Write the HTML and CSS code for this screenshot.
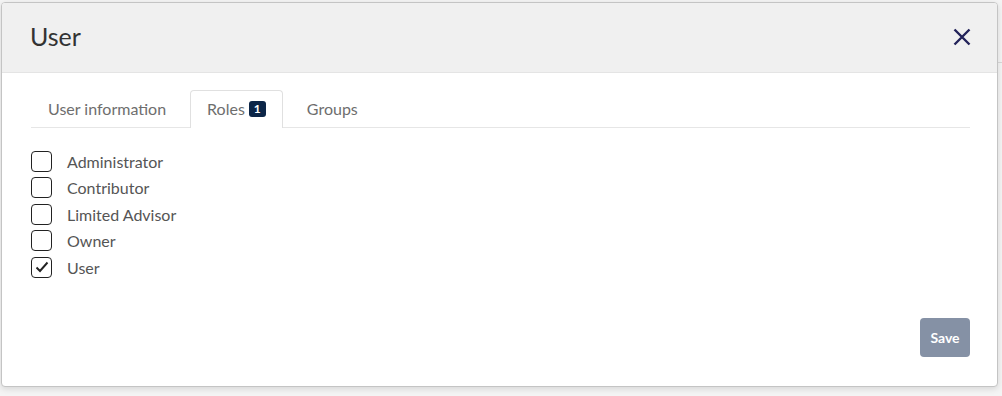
FILE: index.html
```html
<!DOCTYPE html>
<html>
<head>
    <meta charset="UTF-8">
    <title>User</title>
    <link rel="stylesheet" href="styles.css">
</head>
<body>
    <div class="backdrop-line"></div>
    <div class="modal">
        <div class="modal-header">
            <h1 class="modal-title">User</h1>
            <button class="close-button" aria-label="Close">
                <svg width="18" height="18" viewBox="0 0 18 18">
                    <path d="M1.5 1.5 L16.5 16.5 M16.5 1.5 L1.5 16.5" stroke="#23235a" stroke-width="2.4" fill="none"/>
                </svg>
            </button>
        </div>
        <div class="modal-body">
            <div class="tabs">
                <div class="tab">User information</div>
                <div class="tab active">Roles <span class="badge">1</span></div>
                <div class="tab">Groups</div>
            </div>

            <div class="role-list">
                <label class="role"><span class="box"></span>Administrator</label>
                <label class="role"><span class="box"></span>Contributor</label>
                <label class="role"><span class="box"></span>Limited Advisor</label>
                <label class="role"><span class="box"></span>Owner</label>
                <label class="role">
                    <span class="box checked">
                        <svg width="14" height="12" viewBox="0 0 14 12">
                            <path d="M1.5 6.5 L5 10 L12.5 1.5" stroke="#222" stroke-width="1.9" fill="none"/>
                        </svg>
                    </span>User
                </label>
            </div>

            <div class="footer">
                <button class="save-button">Save</button>
            </div>
        </div>
    </div>
</body>
</html>
```

FILE: styles.css
```css
body {
    font-family: Lato, "Noto Sans", sans-serif;
    margin: 0;
    padding: 2px 0 0 1px;
    background-color: #f4f4f4;
    position: relative;
    height: 394px;
    overflow: hidden;
}

.backdrop-line {
    position: absolute;
    left: 998px;
    top: 62px;
    width: 10px;
    height: 1px;
    background-color: #d8d8d8;
}

.modal {
    position: relative;
    width: 995px;
    height: 383px;
    background-color: #fff;
    border: 1px solid #c4c4c4;
    border-radius: 4px;
    box-shadow: 0 2px 6px rgba(0, 0, 0, 0.12);
    display: flex;
    flex-direction: column;
    overflow: hidden;
}

.modal-header {
    height: 69px;
    background-color: #f0f0f0;
    border-bottom: 1px solid #e4e4e4;
    display: flex;
    align-items: center;
    justify-content: space-between;
    padding: 0 26px 0 28px;
}

.modal-title {
    margin: 0 0 3px 0;
    font-size: 25px;
    font-weight: normal;
    color: #333;
}

.close-button {
    background: none;
    border: none;
    padding: 0;
    width: 18px;
    height: 18px;
    margin-bottom: 2px;
    cursor: pointer;
}

.modal-body {
    flex: 1;
    padding: 17px 27px 29px 29px;
    display: flex;
    flex-direction: column;
}

.tabs {
    display: flex;
    border-bottom: 1px solid #e6e6e6;
    height: 37px;
}

.tab {
    padding: 0 16px 2px 16px;
    margin-right: 7px;
    border: 1px solid transparent;
    border-bottom: none;
    border-radius: 4px 4px 0 0;
    font-size: 16px;
    color: #6e6e6e;
    display: flex;
    align-items: center;
}

.tab.active {
    border-color: #e0e0e0;
    background-color: #fff;
    margin-bottom: -1px;
}

.badge {
    background-color: #0c2648;
    color: #fff;
    font-size: 12px;
    font-weight: bold;
    border-radius: 3px;
    width: 17px;
    height: 16px;
    display: inline-flex;
    align-items: center;
    justify-content: center;
    margin-left: 4px;
}

.role-list {
    margin-top: 22px;
    display: flex;
    flex-direction: column;
    gap: 4.5px;
}

.role {
    display: flex;
    align-items: center;
    font-size: 16px;
    color: #555;
    height: 22px;
}

.box {
    width: 19px;
    height: 19px;
    border: 1.5px solid #222;
    border-radius: 4px;
    margin-right: 15px;
    display: inline-flex;
    align-items: center;
    justify-content: center;
}

.footer {
    margin-top: auto;
    display: flex;
    justify-content: flex-end;
}

.save-button {
    background-color: #8591a5;
    color: #fff;
    border: none;
    border-radius: 4px;
    width: 50px;
    height: 39px;
    font-family: Lato, "Noto Sans", sans-serif;
    font-size: 14px;
    font-weight: bold;
    padding: 0;
}
```
